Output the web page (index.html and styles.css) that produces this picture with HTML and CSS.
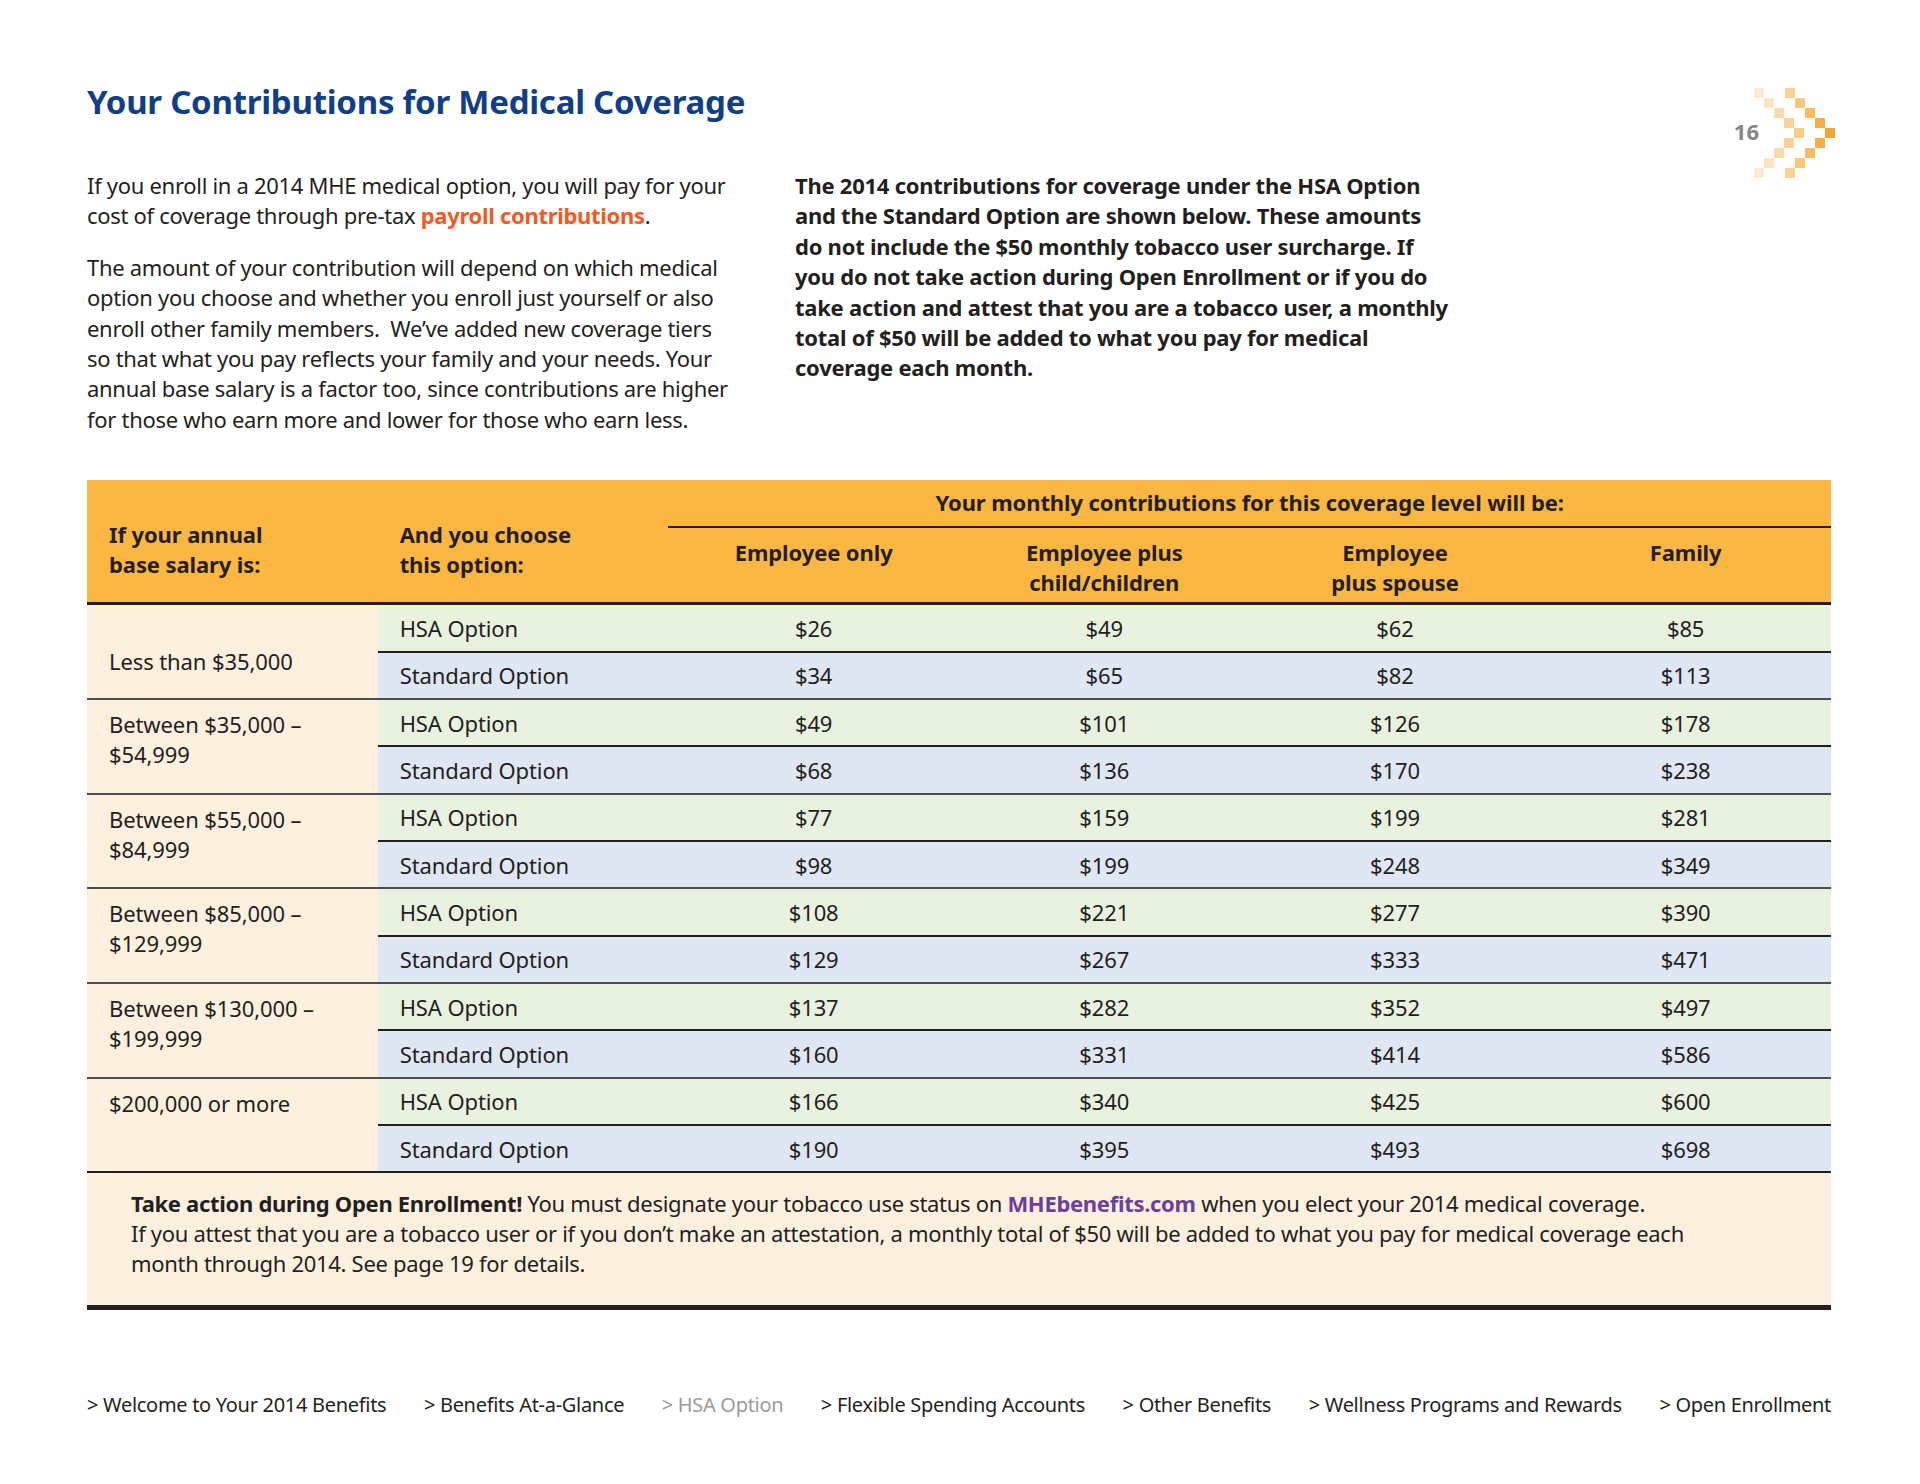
FILE: index.html
```html
<!DOCTYPE html>
<html lang="en">
<head>
<meta charset="utf-8">
<title>Your Contributions for Medical Coverage</title>
<link rel="stylesheet" href="styles.css">
</head>
<body>
<div class="page">
  <header class="top">
    <h1 class="title">Your Contributions for Medical Coverage</h1>
    <div class="pageno">
      <span class="pageno-num">16</span>
      <svg class="chevrons" width="81" height="90" viewBox="0 0 81 90" aria-hidden="true">
        <rect x="0" y="0" width="10" height="10" fill="#fdebd1"/>
        <rect x="10" y="10" width="10" height="10" fill="#fde3bf"/>
        <rect x="20" y="20" width="10" height="10" fill="#fcdaaa"/>
        <rect x="30" y="30" width="10" height="10" fill="#fcd297"/>
        <rect x="40" y="40" width="10" height="10" fill="#fbcc88"/>
        <rect x="30" y="50" width="10" height="10" fill="#fcd297"/>
        <rect x="20" y="60" width="10" height="10" fill="#fcdaaa"/>
        <rect x="10" y="70" width="10" height="10" fill="#fde3bf"/>
        <rect x="0" y="80" width="10" height="10" fill="#fdebd1"/>
        <rect x="31" y="0" width="10" height="10" fill="#fbd190"/>
        <rect x="41" y="10" width="10" height="10" fill="#fbc779"/>
        <rect x="51" y="20" width="10" height="10" fill="#faba5e"/>
        <rect x="61" y="30" width="10" height="10" fill="#f9ae45"/>
        <rect x="71" y="40" width="10" height="10" fill="#f8a32c"/>
        <rect x="61" y="50" width="10" height="10" fill="#f9ae45"/>
        <rect x="51" y="60" width="10" height="10" fill="#faba5e"/>
        <rect x="41" y="70" width="10" height="10" fill="#fbc779"/>
        <rect x="31" y="80" width="10" height="10" fill="#fbd190"/>
      </svg>
    </div>
  </header>

  <section class="intro">
    <div class="intro-left">
      <p>If you enroll in a 2014 MHE medical option, you will pay for your<br>cost of coverage through pre-tax <span class="hl">payroll contributions</span>.</p>
      <p>The amount of your contribution will depend on which medical<br>option you choose and whether you enroll just yourself or also<br>enroll other family members.&nbsp; We’ve added new coverage tiers<br>so that what you pay reflects your family and your needs. Your<br>annual base salary is a factor too, since contributions are higher<br>for those who earn more and lower for those who earn less.</p>
    </div>
    <div class="intro-right">
      <p class="strong">The 2014 contributions for coverage under the HSA Option<br>and the Standard Option are shown below. These amounts<br>do not include the $50 monthly tobacco user surcharge. If<br>you do not take action during Open Enrollment or if you do<br>take action and attest that you are a tobacco user, a monthly<br>total of $50 will be added to what you pay for medical<br>coverage each month.</p>
    </div>
  </section>

  <table class="contrib">
    <colgroup>
      <col class="c"><col class="c"><col class="c"><col class="c"><col class="c"><col class="c">
    </colgroup>
    <thead>
      <tr class="h1row">
        <th rowspan="2" class="th-left">If your annual<br>base salary is:</th>
        <th rowspan="2" class="th-left">And you choose<br>this option:</th>
        <th colspan="4" class="th-span">Your monthly contributions for this coverage level will be:</th>
      </tr>
      <tr class="h2row">
        <th class="th-col">Employee only</th>
        <th class="th-col">Employee plus<br>child/children</th>
        <th class="th-col">Employee<br>plus spouse</th>
        <th class="th-col">Family</th>
      </tr>
    </thead>
    <tbody>
      <tr class="hsa">
        <td rowspan="2" class="salary salary-mid">Less than $35,000</td>
        <td class="opt">HSA Option</td><td>$26</td><td>$49</td><td>$62</td><td>$85</td>
      </tr>
      <tr class="std">
        <td class="opt">Standard Option</td><td>$34</td><td>$65</td><td>$82</td><td>$113</td>
      </tr>
      <tr class="hsa">
        <td rowspan="2" class="salary">Between $35,000 –<br>$54,999</td>
        <td class="opt">HSA Option</td><td>$49</td><td>$101</td><td>$126</td><td>$178</td>
      </tr>
      <tr class="std">
        <td class="opt">Standard Option</td><td>$68</td><td>$136</td><td>$170</td><td>$238</td>
      </tr>
      <tr class="hsa">
        <td rowspan="2" class="salary">Between $55,000 –<br>$84,999</td>
        <td class="opt">HSA Option</td><td>$77</td><td>$159</td><td>$199</td><td>$281</td>
      </tr>
      <tr class="std">
        <td class="opt">Standard Option</td><td>$98</td><td>$199</td><td>$248</td><td>$349</td>
      </tr>
      <tr class="hsa">
        <td rowspan="2" class="salary">Between $85,000 –<br>$129,999</td>
        <td class="opt">HSA Option</td><td>$108</td><td>$221</td><td>$277</td><td>$390</td>
      </tr>
      <tr class="std">
        <td class="opt">Standard Option</td><td>$129</td><td>$267</td><td>$333</td><td>$471</td>
      </tr>
      <tr class="hsa">
        <td rowspan="2" class="salary">Between $130,000 –<br>$199,999</td>
        <td class="opt">HSA Option</td><td>$137</td><td>$282</td><td>$352</td><td>$497</td>
      </tr>
      <tr class="std">
        <td class="opt">Standard Option</td><td>$160</td><td>$331</td><td>$414</td><td>$586</td>
      </tr>
      <tr class="hsa">
        <td rowspan="2" class="salary">$200,000 or more</td>
        <td class="opt">HSA Option</td><td>$166</td><td>$340</td><td>$425</td><td>$600</td>
      </tr>
      <tr class="std">
        <td class="opt">Standard Option</td><td>$190</td><td>$395</td><td>$493</td><td>$698</td>
      </tr>
    </tbody>
  </table>

  <div class="note">
    <p><strong>Take action during Open Enrollment!</strong> You must designate your tobacco use status on <strong class="link">MHEbenefits.com</strong> when you elect your 2014 medical coverage.<br>If you attest that you are a tobacco user or if you don’t make an attestation, a monthly total of $50 will be added to what you pay for medical coverage each<br>month through 2014. See page 19 for details.</p>
  </div>

  <nav class="footer-nav">
    <a>&gt; Welcome to Your 2014 Benefits</a>
    <a>&gt; Benefits At-a-Glance</a>
    <a class="current">&gt; HSA Option</a>
    <a>&gt; Flexible Spending Accounts</a>
    <a>&gt; Other Benefits</a>
    <a>&gt; Wellness Programs and Rewards</a>
    <a>&gt; Open Enrollment</a>
  </nav>
</div>
</body>
</html>
```

FILE: styles.css
```css
html, body {
  margin: 0;
  padding: 0;
  background: #ffffff;
}

body {
  font-family: "Noto Sans", "Open Sans", sans-serif;
  font-stretch: semi-condensed;
  color: #231f20;
  font-size: 22px;
  line-height: 30.4px;
}

.page {
  width: 1744px;
  padding: 82px 89px 0 87px;
}

/* header */
.top {
  display: flex;
  justify-content: space-between;
  align-items: flex-start;
  height: 88px;
}

.title {
  margin: 0;
  font-size: 33px;
  line-height: 40px;
  font-weight: 700;
  color: #0f3e8b;
  letter-spacing: -0.25px;
}

.pageno {
  display: flex;
  align-items: center;
  margin-top: 6px;
  margin-right: -4px;
}

.pageno-num {
  font-size: 22px;
  font-weight: 700;
  color: #858585;
  margin-right: -5px;
  margin-top: -4px;
}

.chevrons {
  display: block;
}

/* intro */
.intro {
  display: grid;
  grid-template-columns: 650px 1fr;
  column-gap: 58px;
}

.intro p {
  margin: 0 0 21px;
  white-space: nowrap;
  letter-spacing: -0.3px;
}

.intro-left p:last-child {
  margin-bottom: 0;
}

.hl {
  color: #f15a22;
  font-weight: 700;
}

.intro p.strong {
  font-weight: 700;
  letter-spacing: -0.25px;
}

/* table */
.contrib {
  margin-top: 46px;
  width: 1744px;
  table-layout: fixed;
  border-collapse: collapse;
  border-spacing: 0;
}

.contrib .c {
  width: 290.66px;
}

.contrib th {
  background: #fbb741;
  font-weight: 700;
  font-size: 22px;
  line-height: 29.6px;
  padding: 0;
  letter-spacing: -0.1px;
}

.h1row {
  height: 47px;
}

.th-left {
  text-align: left;
  vertical-align: top;
  padding: 40px 0 0 22px !important;
  border-bottom: 3px solid #231f20;
}

.th-span {
  text-align: center;
  vertical-align: middle;
  border-bottom: 2px solid #231f20;
}

.th-col {
  text-align: center;
  vertical-align: top;
  padding-top: 10px !important;
  height: 64px;
  border-bottom: 3px solid #231f20;
}

.contrib td {
  padding: 0;
  height: 45.35px;
  text-align: center;
  vertical-align: middle;
  font-size: 22px;
  line-height: 30px;
  letter-spacing: -0.1px;
}

.hsa td {
  background: #e9f2df;
  border-top: 2px solid #4d4d4f;
}

.std td {
  background: #dfe6f4;
  border-top: 2px solid #231f20;
}

.contrib td.salary {
  background: #fef0de;
  text-align: left;
  vertical-align: top;
  padding: 9px 0 0 22px;
}

.contrib td.salary-mid {
  padding-top: 41px;
}

.contrib td.opt {
  text-align: left;
  padding-left: 22px;
}

/* note */
.note {
  background: #fef0de;
  border-top: 2px solid #231f20;
  border-bottom: 5px solid #231f20;
  padding: 15px 44px 27px;
  height: 90px;
}

.note p {
  margin: 0;
  line-height: 30px;
  white-space: nowrap;
  letter-spacing: -0.3px;
}

.note strong {
  font-weight: 700;
}

.note .link {
  color: #6a3fa0;
}

/* footer nav */
.footer-nav {
  margin-top: 80px;
  display: flex;
  justify-content: space-between;
  font-size: 20px;
  line-height: 30px;
  letter-spacing: -0.3px;
}

.footer-nav a {
  color: #231f20;
  text-decoration: none;
  white-space: nowrap;
}

.footer-nav a.current {
  color: #9a9a9a;
}
```
